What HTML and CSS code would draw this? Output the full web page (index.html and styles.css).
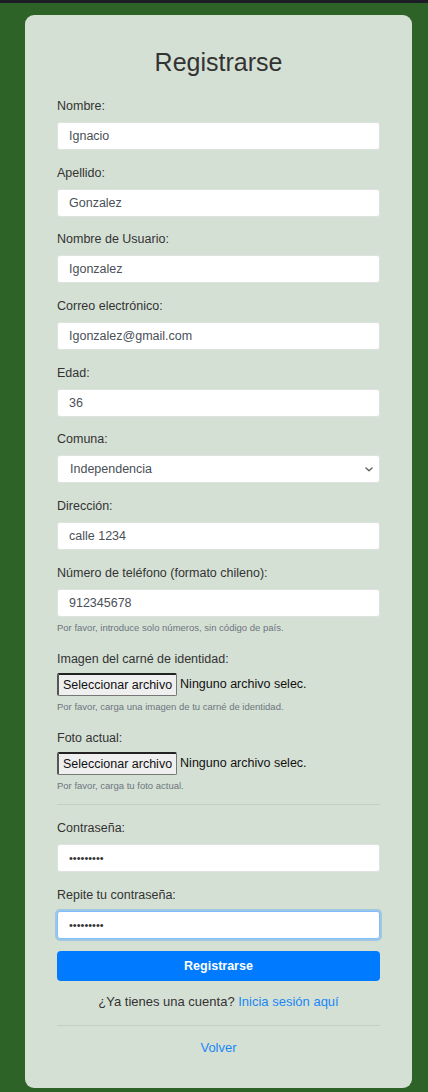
FILE: index.html
```html
<!DOCTYPE html>
<html lang="es">
<head>
<meta charset="utf-8">
<title>Registrarse</title>
<link rel="stylesheet" href="styles.css">
</head>
<body>
<div class="topbar"></div>
<main class="card">
  <h1 class="title">Registrarse</h1>
  <form class="form">
    <div class="group">
      <label class="label">Nombre:</label>
      <input class="input" type="text" value="Ignacio">
    </div>
    <div class="group">
      <label class="label">Apellido:</label>
      <input class="input" type="text" value="Gonzalez">
    </div>
    <div class="group">
      <label class="label">Nombre de Usuario:</label>
      <input class="input" type="text" value="Igonzalez">
    </div>
    <div class="group">
      <label class="label">Correo electrónico:</label>
      <input class="input" type="text" value="Igonzalez@gmail.com">
    </div>
    <div class="group">
      <label class="label">Edad:</label>
      <input class="input" type="text" value="36">
    </div>
    <div class="group">
      <label class="label">Comuna:</label>
      <div class="select-wrap">
        <select class="input select"><option>Independencia</option></select>
        <svg class="chevron" width="8" height="5" viewBox="0 0 8 5"><path d="M1 1 L4 3.8 L7 1" fill="none" stroke="#666" stroke-width="1.5" stroke-linecap="round" stroke-linejoin="round"/></svg>
      </div>
    </div>
    <div class="group">
      <label class="label">Dirección:</label>
      <input class="input" type="text" value="calle 1234">
    </div>
    <div class="group">
      <label class="label">Número de teléfono (formato chileno):</label>
      <input class="input" type="text" value="912345678">
      <small class="help">Por favor, introduce solo números, sin código de país.</small>
    </div>
    <div class="group">
      <label class="label">Imagen del carné de identidad:</label>
      <div class="file">
        <span class="file-btn">Seleccionar archivo</span>
        <span class="file-name">Ninguno archivo selec.</span>
      </div>
      <small class="help">Por favor, carga una imagen de tu carné de identidad.</small>
    </div>
    <div class="group">
      <label class="label">Foto actual:</label>
      <div class="file">
        <span class="file-btn">Seleccionar archivo</span>
        <span class="file-name">Ninguno archivo selec.</span>
      </div>
      <small class="help">Por favor, carga tu foto actual.</small>
    </div>
    <hr class="rule rule-top">
    <div class="group">
      <label class="label">Contraseña:</label>
      <input class="input pw" type="password" value="123456789">
    </div>
    <div class="group">
      <label class="label">Repite tu contraseña:</label>
      <input class="input pw focused" type="password" value="123456789">
    </div>
    <button class="submit" type="button">Registrarse</button>
  </form>
  <p class="login">¿Ya tienes una cuenta? <a class="link" href="#">Inicia sesión aquí</a></p>
  <hr class="rule rule-bottom">
  <p class="back"><a class="link" href="#">Volver</a></p>
</main>
</body>
</html>
```

FILE: styles.css
```css
* { box-sizing: border-box; }
html, body { margin: 0; padding: 0; }
body {
  background: #2e6328;
  font-family: "Liberation Sans", Arial, sans-serif;
  color: #333;
  min-height: 1092px;
}
.topbar { height: 3px; background: #1b1c26; }
.card {
  margin: 12px 16px 0 25px;
  background: #d5e0d5;
  border-radius: 9px;
  padding: 33px 32px 28px 32px;
  height: 1073px;
}
.title {
  margin: 0 0 22px;
  font-size: 25px;
  line-height: 28px;
  font-weight: 400;
  text-align: center;
  color: #333;
}
.form { display: flex; flex-direction: column; }
.group { display: flex; flex-direction: column; margin-bottom: 14.7px; }
.label {
  display: block;
  font-size: 12.5px;
  line-height: 16px;
  margin-bottom: 8px;
  color: #333;
}
.input {
  display: block;
  width: 100%;
  height: 28px;
  border: 1px solid #dfe3df;
  border-radius: 3px;
  background: #fff;
  padding: 0 11px;
  font-family: "Liberation Sans", Arial, sans-serif;
  font-size: 12.5px;
  color: #495057;
  outline: none;
  margin: 0;
}
.pw { font-size: 11px; color: #333; }
.focused {
  border-color: #80bdff;
  box-shadow: 0 0 0 2px rgba(0,123,255,0.25);
}
.select-wrap { position: relative; }
.select {
  appearance: none;
  -webkit-appearance: none;
  padding-left: 12px;
}
.chevron { position: absolute; right: 7px; top: 12px; }
.help {
  display: block;
  font-size: 9.5px;
  line-height: 12px;
  margin-top: 5px;
  color: #6c757d;
}
.group:has(.help) { margin-bottom: 17px; }
.file {
  display: flex;
  align-items: center;
  margin-top: -2px;
  height: 23px;
}
.file-btn {
  height: 23px;
  display: flex;
  align-items: center;
  padding: 0 4px;
  background: #efefef;
  border: 1px solid #767676;
  border-top: 2px solid #222;
  border-left: 2px solid #555;
  border-radius: 2px;
  font-size: 12.5px;
  color: #111;
}
.file-name { margin-left: 3px; font-size: 12.5px; color: #111; }
.rule {
  border: 0;
  border-top: 1px solid #c3cfc3;
  margin: 0;
}
.rule-top { margin: -5px 0 15px; }
.submit {
  display: block;
  width: 100%;
  height: 30px;
  margin-top: -2px;
  background: #007bff;
  border: 0;
  border-radius: 4px;
  color: #fff;
  font-family: "Liberation Sans", Arial, sans-serif;
  font-size: 12.5px;
  font-weight: 700;
}
.login {
  margin: 13px 0 0;
  font-size: 13px;
  line-height: 16px;
  text-align: center;
  color: #333;
}
.link { color: #1a87f5; text-decoration: none; }
.rule-bottom { margin: 15px 0 0; }
.back {
  margin: 14px 0 0;
  font-size: 13px;
  line-height: 16px;
  text-align: center;
}
```
